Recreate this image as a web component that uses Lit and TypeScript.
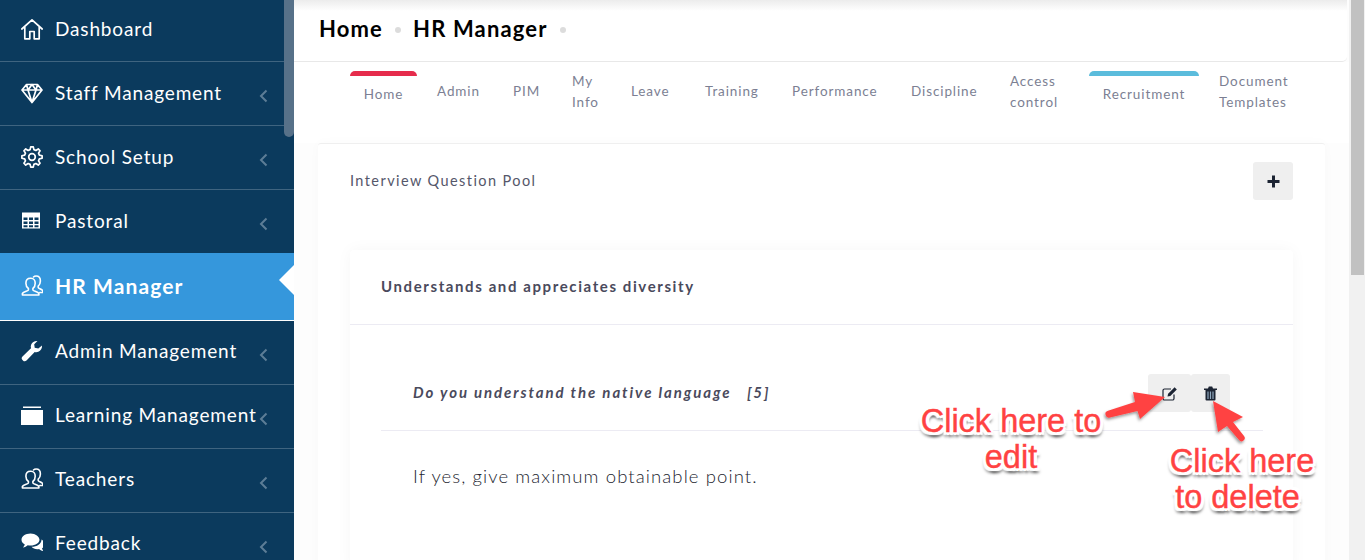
import {LitElement, html, css, svg} from 'lit';
import {customElement} from 'lit/decorators.js';

// builds the outline of a gear, the sidebar only needs one of them
function gearPath(cx: number, cy: number, teeth: number, outer: number, inner: number) {
    const pts: string[] = [];
    const step = (Math.PI * 2) / teeth;
    for (let i = 0; i < teeth; i++) {
        const a = i * step - Math.PI / 2;
        const corners: [number, number][] = [
            [a - step * 0.32, inner],
            [a - step * 0.16, outer],
            [a + step * 0.16, outer],
            [a + step * 0.32, inner],
        ];
        for (const [ang, r] of corners) {
            pts.push(`${(cx + Math.cos(ang) * r).toFixed(2)} ${(cy + Math.sin(ang) * r).toFixed(2)}`);
        }
    }
    return `M${pts.join('L')}Z`;
}

const users = svg`
    <g fill="none" stroke="#fff" stroke-width="1.6" stroke-linejoin="round" stroke-linecap="round">
        <path d="M9.5 3.2c-3 0-4.6 2.3-4.6 5 0 2.3 1 4.2 2.5 5.3v1.6c0 1-5 1.6-6 3.4v1.5h16.5v-1.5c-1-1.8-6-2.4-6-3.4v-1.6c1.5-1.1 2.3-3 2.3-5.3 0-2.7-1.6-5-4.2-5z"/>
        <path d="M12.5 2c.6-.6 1.6-1 2.6-1 2.8 0 4.3 2.3 4.3 5 0 2.2-.8 4-2.2 5.1v1.5c0 .9 3.6 1.4 4.6 3.1v1.8h-3"/>
    </g>`;

const ICONS: Record<string, unknown> = {
    home: svg`<path d="M.8 11 11 1.800 21.200 11M3.800 8.600v12.200h5v-7.300h4.400v7.300h5V8.600" fill="none" stroke="#fff" stroke-width="1.7" stroke-linejoin="round" stroke-linecap="round"/>`,
    diamond: svg`<path d="M5.500 2.500h11L21 8 11 20.500 1 8zM1 8h20M7 8l4 12.500L15 8l-4-5.500zM5.500 2.500 7 8M16.500 2.500 15 8" fill="none" stroke="#fff" stroke-width="1.7" stroke-linejoin="round"/>`,
    cog: svg`<path d="${gearPath(11, 11, 8, 10.2, 7.6)}" fill="none" stroke="#fff" stroke-width="1.7" stroke-linejoin="round"/><circle cx="11" cy="11" r="3.3" fill="none" stroke="#fff" stroke-width="1.7"/>`,
    table: svg`<path fill="#fff" fill-rule="evenodd" d="M1 2.500h18v16H1zM2.500 7.500V10h4V7.500zm5.500 0V10h4V7.500zm5.500 0V10h4V7.500zM2.500 11.500V14h4v-2.500zm5.500 0V14h4v-2.500zm5.500 0V14h4v-2.500zM2.500 15.300v2h4v-2zm5.500 0v2h4v-2zm5.500 0v2h4v-2z"/>`,
    users,
    wrench: svg`<path fill="#fff" d="M21 5.500c.3 2.800-1.200 5.300-3.700 6.300-1.200.5-2.500.5-3.600.2L5.500 20.500c-1 1-2.500 1-3.300.2l-.9-.9c-.9-.9-.8-2.300.2-3.300L10 8.300c-.4-1.200-.3-2.500.2-3.700C11.200 2.200 13.700.8 16.500 1.100l-3.300 3.200.5 3.500 3.600.6z"/>`,
    folder: svg`<path fill="#fff" d="M2 2.500h18v1.500H2zM0 6h22v15H0z"/>`,
    comments: svg`<path fill="#fff" d="M9.500 1.500C4.500 1.500.5 4.300.5 7.800c0 2 1.300 3.700 3.300 4.800-.3 1-.9 2-1.800 2.900 1.800-.2 3.500-1 4.700-2.200 1 .2 1.800.3 2.800.3 5 0 9-2.800 9-5.800s-4-6.300-9-6.300z"/><path fill="#fff" d="M20.500 7.500c.1 4-4.400 7.200-10 7.300 1.300 1.500 3.400 2.400 5.800 2.400.6 0 1.200 0 1.800-.2 1 1 2.500 1.800 4.400 2-.8-.8-1.300-1.700-1.500-2.700 1.500-.9 2.500-2.300 2.500-3.900 0-2-1.100-3.800-3-4.900z"/>`,
};

interface NavItem {
    label: string;
    icon: string;
    chevron?: boolean;
    active?: boolean;
}

const NAV: NavItem[] = [
    {label: 'Dashboard', icon: 'home'},
    {label: 'Staff Management', icon: 'diamond', chevron: true},
    {label: 'School Setup', icon: 'cog', chevron: true},
    {label: 'Pastoral', icon: 'table', chevron: true},
    {label: 'HR Manager', icon: 'users', active: true},
    {label: 'Admin Management', icon: 'wrench', chevron: true},
    {label: 'Learning Management', icon: 'folder', chevron: true},
    {label: 'Teachers', icon: 'users', chevron: true},
    {label: 'Feedback', icon: 'comments', chevron: true},
];

const TABS: {lines: string[]; marked?: 'red' | 'blue'}[] = [
    {lines: ['Home'], marked: 'red'},
    {lines: ['Admin']},
    {lines: ['PIM']},
    {lines: ['My', 'Info']},
    {lines: ['Leave']},
    {lines: ['Training']},
    {lines: ['Performance']},
    {lines: ['Discipline']},
    {lines: ['Access', 'control']},
    {lines: ['Recruitment'], marked: 'blue'},
    {lines: ['Document', 'Templates']},
];

@customElement('app-root')
export class AppRoot extends LitElement {
    static override styles = css`
        :host {
            display: flex;
            width: 1365px;
            height: 560px;
            overflow: hidden;
            position: relative;
            background: #fff;
            font-family: 'Lato', sans-serif;
        }

        /* sidebar */
        .sidebar {
            flex: 0 0 294px;
            height: 560px;
            overflow: hidden;
            background: #0b3a5d;
            position: relative;
        }

        .nav {
            margin-top: -2px;
        }

        .nav-item {
            height: 64px;
            box-sizing: border-box;
            border-bottom: 1px solid #3f6480;
            display: flex;
            align-items: center;
            padding: 0 0 2px 21px;
            color: #fff;
            font-size: 19px;
            letter-spacing: 0.85px;
            font-weight: 400;
            white-space: nowrap;
            position: relative;
        }

        .nav-item.active ~ .nav-item {
            padding-bottom: 4px;
        }

        .nav-item.active {
            height: 68px;
            margin-top: -1px;
            background: #3597dc;
            border-bottom-color: #fff;
            font-weight: 700;
            font-size: 21px;
            letter-spacing: 1.1px;
        }

        .nav-item svg.icon {
            flex: 0 0 22px;
            width: 22px;
            height: 22px;
            margin-right: 12px;
        }

        .nav-item .chevron {
            position: absolute;
            left: 259px;
            top: 27px;
            width: 9px;
            height: 14px;
        }

        .notch {
            position: absolute;
            left: 279px;
            top: 265px;
            width: 0;
            height: 0;
            border-top: 15px solid transparent;
            border-bottom: 15px solid transparent;
            border-right: 15px solid #fff;
        }

        .side-thumb {
            position: absolute;
            left: 284px;
            top: 0;
            width: 10px;
            height: 137px;
            border-radius: 0 0 5px 5px;
            background: #577189;
        }

        /* main column */
        .main {
            flex: 1 1 auto;
            min-width: 0;
            background: #fdfdfd;
        }

        .topbar {
            height: 62px;
            margin-right: 2px;
            box-sizing: border-box;
            border-bottom: 1px solid #e8e8e8;
            border-bottom-right-radius: 5px;
            background: linear-gradient(#ececec, #fff 11px);
            display: flex;
            align-items: center;
            padding: 0 0 4px 25px;
            font-size: 22px;
            font-weight: 700;
            color: #000;
            letter-spacing: 1.15px;
        }

        .dot {
            width: 6px;
            height: 6px;
            border-radius: 50%;
            background: #dcdcdc;
            margin: 3px 12px 0 12px;
        }

        .tabs {
            display: grid;
            grid-template-columns: 87px 76px 59px 59px 74px 87px 119px 99px 79px 130px 130px;
            height: 81px;
            padding-left: 56px;
            background: #fff;
            box-sizing: border-box;
            padding-top: 9px;
            align-items: start;
        }

        .tab {
            font-size: 13.5px;
            line-height: 21px;
            letter-spacing: 0.9px;
            color: #7c7f93;
            white-space: nowrap;
            text-align: left;
        }

        .tab.single {
            padding-top: 10px;
        }

        .tab.marked {
            border-top: 5px solid;
            border-radius: 5px 5px 0 0;
            padding-top: 8px;
            text-align: center;
        }

        .tab.red {
            width: 67px;
            border-top-color: #e62c4c;
        }

        .tab.blue {
            width: 110px;
            border-top-color: #5bbcdc;
        }

        .card {
            width: 1007px;
            margin-left: 24px;
            height: 430px;
            box-sizing: border-box;
            background: #fff;
            border-top: 1px solid #efefef;
            border-radius: 3px 3px 0 0;
            box-shadow: 0 0 12px rgba(0, 0, 0, 0.025);
            padding: 18px 32px 0;
        }

        .card-head {
            display: flex;
            justify-content: space-between;
            align-items: center;
            height: 38px;
            margin-bottom: 50px;
        }

        .card-title {
            font-size: 14.5px;
            letter-spacing: 1.42px;
            color: #55576a;
            margin-top: -2px;
        }

        .btn {
            width: 40px;
            height: 38px;
            border-radius: 3px;
            background: #efefef;
            display: flex;
            align-items: center;
            justify-content: center;
        }

        .panel {
            background: #fff;
            height: 320px;
            border-radius: 4px 4px 0 0;
            box-shadow: 0 0 16px rgba(0, 0, 0, 0.04);
        }

        .panel-head {
            height: 75px;
            box-sizing: border-box;
            border-bottom: 1px solid #ecebf3;
            display: flex;
            align-items: center;
            padding: 0 0 2px 31px;
            font-size: 15px;
            font-weight: 700;
            letter-spacing: 1.6px;
            color: #4a4a5c;
        }

        .panel-body {
            padding: 49px 30px 0 31px;
        }

        .question {
            height: 57px;
            box-sizing: border-box;
            border-bottom: 1px solid #ecebf3;
            display: flex;
            justify-content: space-between;
            padding-left: 32px;
        }

        .question-text {
            font-size: 15px;
            font-style: italic;
            font-weight: 700;
            letter-spacing: 1.9px;
            color: #4a4a5c;
            line-height: 36px;
            white-space: pre;
        }

        .actions {
            display: flex;
            margin-right: 33px;
        }

        .actions .btn.edit {
            width: 43px;
        }

        .actions .btn.del {
            width: 39px;
        }

        .answer {
            padding: 31px 0 0 32px;
            font-size: 18.5px;
            font-weight: 300;
            letter-spacing: 1.1px;
            color: #23252f;
            line-height: 28px;
        }

        /* page scrollbar */
        .page-scroll {
            flex: 0 0 16px;
            height: 560px;
            background: #f1f1f1;
            padding: 0 1px 0 2px;
            box-sizing: border-box;
        }

        .page-thumb {
            height: 275px;
            background: #c1c1c1;
        }

        /* red callouts drawn over the screenshot */
        .arrows {
            position: absolute;
            left: 0;
            top: 0;
            pointer-events: none;
        }

        .callout {
            position: absolute;
            text-align: center;
            font-family: 'Liberation Sans', Arial, sans-serif;
            font-size: 32.5px;
            line-height: 36px;
            color: #ff4242;
            white-space: nowrap;
            -webkit-text-stroke: 0.4px #ff4242;
            text-shadow: 2px 0 0 #fff, -2px 0 0 #fff, 0 2px 0 #fff, 0 -2px 0 #fff, 2px 2px 0 #fff, -2px 2px 0 #fff,
                2px -2px 0 #fff, -2px -2px 0 #fff, 3px 0 0 #fff, -3px 0 0 #fff, 0 3px 0 #fff, 0 -3px 0 #fff,
                3px 3px 1px #fff, -3px 3px 1px #fff, 3px -3px 1px #fff, -3px -3px 1px #fff,
                2px 5px 3px rgba(0, 0, 0, 0.6), -2px 5px 3px rgba(0, 0, 0, 0.4);
        }

        .callout.edit {
            left: 911px;
            top: 403px;
            width: 200px;
        }

        .callout.del {
            left: 1142px;
            top: 443px;
            width: 200px;
        }

        .callout .nudged {
            display: block;
            padding-right: 9px;
        }
    `;

    private _renderNav(item: NavItem) {
        return html`
            <div class="nav-item ${item.active ? 'active' : ''}">
                <svg class="icon" viewBox="0 0 22 22">${ICONS[item.icon]}</svg>
                ${item.label}
                ${item.chevron
                    ? html`<svg class="chevron" viewBox="0 0 9 14">
                          <path d="M7.5 1.5 2 7l5.5 5.5" fill="none" stroke="#5d7d96" stroke-width="2" />
                      </svg>`
                    : ''}
            </div>
        `;
    }

    private _renderTab(tab: {lines: string[]; marked?: string}) {
        const classes = [
            'tab',
            tab.lines.length === 1 ? 'single' : '',
            tab.marked ? `marked ${tab.marked}` : '',
        ].join(' ');
        return html`<div class=${classes}>${tab.lines.map((l) => html`<div>${l}</div>`)}</div>`;
    }

    override render() {
        return html`
            <aside class="sidebar">
                <div class="nav">${NAV.map((n) => this._renderNav(n))}</div>
                <div class="notch"></div>
                <div class="side-thumb"></div>
            </aside>
            <main class="main">
                <div class="topbar">
                    <span>Home</span><span class="dot"></span><span>HR Manager</span><span class="dot"></span>
                </div>
                <div class="tabs">${TABS.map((t) => this._renderTab(t))}</div>
                <section class="card">
                    <div class="card-head">
                        <span class="card-title">Interview Question Pool</span>
                        <div class="btn">
                            <svg width="13" height="13" viewBox="0 0 13 13">
                                <path d="M6.5 .5v12M.5 6.5h12" stroke="#1c2433" stroke-width="3" />
                            </svg>
                        </div>
                    </div>
                    <div class="panel">
                        <div class="panel-head">Understands and appreciates diversity</div>
                        <div class="panel-body">
                            <div class="question">
                                <span class="question-text">Do you understand the native language   [5]</span>
                                <div class="actions">
                                    <div class="btn edit">
                                        <svg width="16" height="15" viewBox="0 0 16 15">
                                            <path d="M12 8.500v4a1.500 1.500 0 0 1-1.500 1.500h-8A1.500 1.500 0 0 1 1 12.500v-8A1.500 1.500 0 0 1 2.500 3H9" fill="none" stroke="#1c2433" stroke-width="1.2" />
                                            <path d="M5.500 10.500l.6-2.800L12.600 1.200l2.200 2.200-6.500 6.500z" fill="#1c2433" />
                                        </svg>
                                    </div>
                                    <div class="btn del">
                                        <svg width="13" height="15" viewBox="0 0 13 15">
                                            <path d="M0 2.500h13v1.500H0zM4 2.500l.8-2h3.400l.8 2" fill="#1c2433" />
                                            <path d="M1.500 4v9.500a1 1 0 0 0 1 1h8a1 1 0 0 0 1-1V4z" fill="#1c2433" />
                                            <path d="M4 5.500v7.500M6.500 5.500v7.500M9 5.500v7.500" stroke="#8fa9bf" stroke-width="1.2" />
                                        </svg>
                                    </div>
                                </div>
                            </div>
                            <div class="answer">If yes, give maximum obtainable point.</div>
                        </div>
                    </div>
                </section>
            </main>
            <div class="page-scroll"><div class="page-thumb"></div></div>

            <svg class="arrows" width="1365" height="560" viewBox="0 0 1365 560">
                <defs>
                    <filter id="sh" x="-30%" y="-30%" width="160%" height="160%">
                        <feDropShadow dx="-1" dy="2" stdDeviation="1.5" flood-color="#000" flood-opacity="0.4" />
                    </filter>
                </defs>
                <g fill="#ff4242" filter="url(#sh)">
                    <path d="M1133 392 1165 397 1140 419 1137.5 411 1110 417.5a3.5 3.5 0 0 1-2-6.800L1135 402z" />
                    <path d="M1213 401 1243 417 1233 422 1244 436a3 3 0 0 1-5 4L1227 426 1218 432z" />
                </g>
            </svg>
            <div class="callout edit">Click here to<br />edit</div>
            <div class="callout del">Click here<span class="nudged">to delete</span></div>
        `;
    }
}

declare global {
    interface HTMLElementTagNameMap {
        'app-root': AppRoot;
    }
}
